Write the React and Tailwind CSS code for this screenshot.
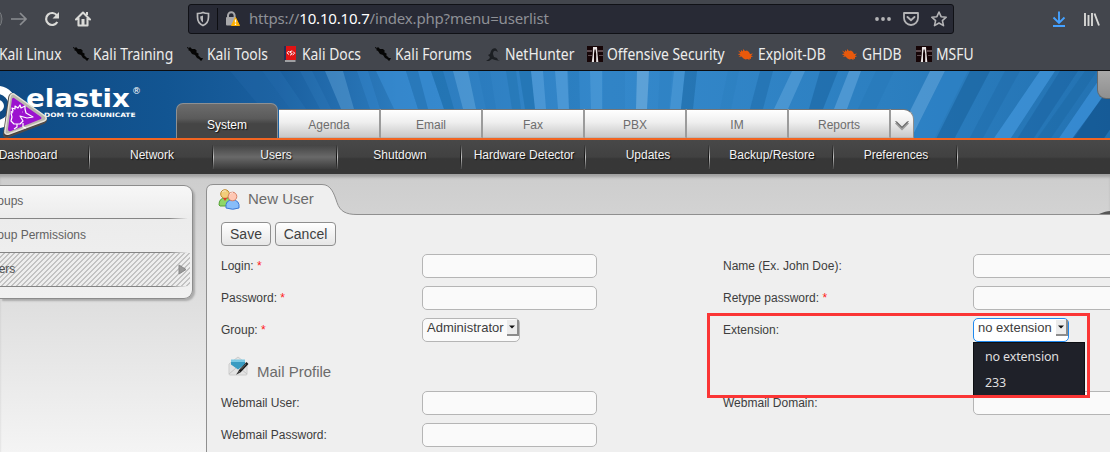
import React from "react";

const BOOKMARKS = [
  { label: "Kali Training", icon: "dragon", w: "w-[114px]" },
  { label: "Kali Tools", icon: "dragon", w: "w-[95px]" },
  { label: "Kali Docs", icon: "docs", w: "w-[93px]" },
  { label: "Kali Forums", icon: "dragon", w: "w-[110px]" },
  { label: "NetHunter", icon: "hunter", w: "w-[102px]" },
  { label: "Offensive Security", icon: "tower", w: "w-[151px]" },
  { label: "Exploit-DB", icon: "bug", w: "w-[104px]" },
  { label: "GHDB", icon: "bug", w: "w-[74px]" },
  { label: "MSFU", icon: "tower", w: "w-[80px]" },
];

function BookmarkIcon({ kind }) {
  return (
    <svg width="17" height="17" viewBox="0 0 17 17" className="shrink-0">
      {kind === "dragon" && (
        <path d="M0 1l2 1 1-1 2 2 3 0 2 2-1 1 3 2-1 1 2 2 1 1 2 0-1 2-1 1-2-2-2-1-2-3-3-1-2-3-2-1 1-1-2-1z" fill="#050505" />
      )}
      {kind === "docs" && (
        <g>
          <path d="M2 0h12v14H2z" fill="#e01414" />
          <path d="M2 0h2v14H2z" fill="#233056" />
          <path d="M3 15h10.500" stroke="#ddd" strokeWidth="1.200" />
          <path d="M6.800 5L5 6.800 7 8.500M11 5.500l1.700 1.700-2 1.800M10.200 4.800L7.500 6l2.800 1.700-2.300 1.600" stroke="#fff" strokeWidth="1" fill="none" />
        </g>
      )}
      {kind === "hunter" && (
        <path d="M1 15l3-2c2-2 0-3-1-4l2-1 1-3c1-3 5-4 6-1l1 2-2-1c-2-1-3 1-3 3l1 3 3 1 1 2 2 1-5-1-3-1-3 2z" fill="#1c1f23" />
      )}
      {kind === "tower" && (
        <g>
          <path d="M0 0h16v16H0z" fill="#160507" />
          <path d="M0 4h5v2H0zM11 4h5v2h-5zM1 9h4v1H1zM12 9h4v1h-4z" fill="#5d4a4e" />
          <path d="M6 1h4l.5 7 .8 8H9.200V8L8.600 3.500h-1L7 8v8H4.800l1-8z" fill="#e9e4e4" />
        </g>
      )}
      {kind === "bug" && (
        <path d="M0 4.500l3 1.500 0-2 2 1.500 0-2.500 2 2 2-.5 2 1.500 1 2 3-.5-2 2 2 1-2 .5 0 2-1.500-.5 0 1.500-2-1-2 .5-2-1-2-2-3 .5 2-1.500-3-1.500 3-.5z" fill="#e8590c" />
      )}
    </svg>
  );
}

function BrowserChrome() {
  return (
    <header className="h-[71px] shrink-0 border-b border-[#0c0d10] bg-[#43464d] font-['Noto_Sans',sans-serif]">
      <div className="flex h-[38px] items-center">
        <svg width="188" height="38" viewBox="0 0 188 38" fill="none" className="shrink-0">
          <circle cx="-10" cy="19" r="12" fill="#53565b" stroke="#777a7e" />
          <path d="M11 19h15M20 13l6 6-6 6" stroke="#8b8d91" strokeWidth="1.700" />
          <path d="M57 15.500A6 6 0 1 0 57.300 22" stroke="#dadad7" strokeWidth="2.200" />
          <path d="M59 12v6.500h-6.500z" fill="#dadad7" />
          <path d="M76 19.500l7-7 7 7M78.500 18v7.500h9V18" stroke="#dadad7" strokeWidth="2.100" strokeLinejoin="round" strokeLinecap="round" />
          <path d="M81.500 19h3v6h-3zM86 12h2v3h-2z" fill="#dadad7" />
        </svg>
        <div className="flex h-[30px] w-[766px] items-center rounded-[3px] border border-[#101116] bg-[#282a35]">
          <svg width="58" height="28" viewBox="0 0 58 28" fill="none" className="shrink-0">
            <path d="M14 7.500c-2 1-3.500 1-5.500 1v3.500c0 4 2 7 5.500 8.500 3.500-1.500 5.500-4.500 5.500-8.500V8.500c-2 0-3.500 0-5.500-1z" stroke="#b9b9bb" strokeWidth="1.700" />
            <path d="M14 10.500v7c-1.800-1-2.800-3-2.800-6z" fill="#b9b9bb" />
            <path d="M28.500 3v22" stroke="#0d0e12" />
            <path d="M39 13v-2.500a3.300 3.300 0 0 1 6.600 0V13" stroke="#a8a8aa" strokeWidth="2" />
            <rect x="37" y="12" width="9.500" height="8.500" rx="1" fill="#a8a8aa" />
            <path d="M46.500 12.500l4 8h-8z" fill="#ffb000" stroke="#ffb000" strokeLinejoin="round" />
            <path d="M46.500 14.500v3M46.500 18.500v1.500" stroke="#fff" strokeWidth="1.300" />
          </svg>
          <div className="mb-px ml-[2px] flex-1 text-[15px] tracking-[-0.180px] whitespace-nowrap text-[#8e9096]">
            https://<span className="text-white">10.10.10.7</span>/index.php?menu=userlist
          </div>
          <svg width="80" height="28" viewBox="0 0 80 28" fill="none" className="shrink-0">
            <g fill="#b4b4b6">
              <circle cx="4" cy="14" r="1.900" />
              <circle cx="10" cy="14" r="1.900" />
              <circle cx="16" cy="14" r="1.900" />
            </g>
            <path d="M31 8h14v5a7 7 0 0 1-14 0z" stroke="#b4b4b6" strokeWidth="1.800" strokeLinejoin="round" />
            <path d="M34.500 12l3.500 3.300 3.500-3.300" stroke="#b4b4b6" strokeWidth="1.900" strokeLinecap="round" />
            <path d="M66 7l2.100 4.700 5.100.5-3.800 3.400 1.100 5L66 18l-4.500 2.600 1.100-5-3.800-3.400 5.100-.5z" stroke="#b4b4b6" strokeWidth="1.600" strokeLinejoin="round" />
          </svg>
        </div>
        <svg width="156" height="38" viewBox="0 0 156 38" fill="none" className="shrink-0">
          <path d="M105 11.500V23M99.500 17.500l5.500 5.500 5.500-5.500M99 26h12" stroke="#45a1ff" strokeWidth="1.900" />
          <path d="M131 13v13M134.500 15v11M138 13v13M140.500 13.500l4.500 12" stroke="#d7d7d5" strokeWidth="1.900" />
        </svg>
      </div>
      <nav className="flex h-[33px] items-center text-[15.500px] whitespace-nowrap text-[#ededec]">
        <div className="flex w-[73px] shrink-0 justify-start">
          <span className="-ml-[1px] origin-left scale-x-[0.895]">Kali Linux</span>
        </div>
        {BOOKMARKS.map((b) => (
          <div key={b.label} className={`flex shrink-0 items-center gap-[3px] ${b.w}`}>
            <BookmarkIcon kind={b.icon} />
            <span className="origin-left scale-x-[0.895]">{b.label}</span>
          </div>
        ))}
      </nav>
    </header>
  );
}

// Each ray: left/right edge at the top, left/right edge 38px lower, fill, opacity.
const RAYS = [
  [230, 262, 262, 290, "#3a86c8", 0.12],
  [262, 280, 290, 306, "#3a86c8", 0.18],
  [300, 312, 320, 331, "#3a86c8", 0.2],
  [325, 343, 341, 354, "#6aa9dc", 0.4],
  [357, 368, 370, 380, "#3a8fd6", 0.3],
  [376, 406, 394, 418, "#3d93db", 0.5],
  [406, 418, 418, 428, "#1f70ae", 0.25],
  [418, 431, 428, 444, "#3d93db", 0.5],
  [431, 443, 444, 454, "#1a6ba8", 0.5],
  [453, 468, 463, 476, "#74b3e6", 0.4],
  [478, 490, 486, 496, "#1f70ae", 0.2],
  [506, 516, 512, 521, "#1f70ae", 0.45],
  [519, 531, 525, 535, "#1a6ba8", 0.5],
  [531, 543, 535, 546, "#6eb2e8", 0.4],
  [555, 568, 558, 569, "#6eb2e8", 0.4],
  [567, 579, 569, 580, "#1f70ae", 0.3],
  [590, 602, 591, 602, "#6eb2e8", 0.3],
  [603, 625, 603, 625, "#1f70ae", 0.15],
  [637, 649, 636, 647, "#9cc9ec", 0.4],
  [660, 672, 658, 669, "#1f70ae", 0.15],
  [674, 685, 670, 681, "#6eb2e8", 0.3],
  [685, 697, 681, 693, "#1a65a0", 0.5],
  [728, 739, 720, 731, "#1f70ae", 0.15],
  [760, 773, 750, 763, "#1a65a0", 0.4],
  [792, 805, 774, 788, "#7cb9ea", 0.35],
  [820, 838, 809, 823, "#155f9c", 0.5],
  [849, 861, 834, 847, "#7cb9ea", 0.4],
  [876, 894, 858, 876, "#1f70ae", 0.25],
  [930, 945, 911, 926, "#7cb9ea", 0.4],
  [945, 968, 926, 949, "#2f83c8", 0.6],
  [970, 990, 951, 970, "#135a94", 0.45],
  [1005, 1020, 985, 999, "#1a65a0", 0.3],
  [1040, 1055, 1014, 1030, "#4ba0e8", 0.55],
  [1060, 1078, 1036, 1053, "#135a94", 0.35],
  [1085, 1097, 1058, 1071, "#135a94", 0.25],
  [1105, 1120, 1079, 1094, "#3d93db", 0.7],
  [1122, 1150, 1094, 1124, "#0d4d85", 0.6],
];

function BannerRays() {
  return (
    <svg width="1110" height="67" viewBox="0 0 1110 67" className="absolute inset-0">
      <defs>
        <linearGradient id="sky" x1="0" x2="1" y1="0" y2="0">
          <stop offset="0" stopColor="#104a83" />
          <stop offset="0.15" stopColor="#125592" />
          <stop offset="0.25" stopColor="#1a5f9f" />
          <stop offset="0.36" stopColor="#2c7bbd" />
          <stop offset="0.55" stopColor="#3488cb" />
          <stop offset="0.8" stopColor="#2c7fc0" />
          <stop offset="1" stopColor="#2372b2" />
        </linearGradient>
      </defs>
      <rect width="1110" height="67" fill="url(#sky)" />
      {RAYS.map(([a, b, c, d, fill, opacity]) => {
        const k = 67 / 38;
        const l = a + (c - a) * k;
        const r = b + (d - b) * k;
        return <polygon key={a} points={`${a},0 ${b},0 ${r},67 ${l},67`} fill={fill} opacity={opacity} />;
      })}
    </svg>
  );
}

function Logo() {
  return (
    <div className="relative h-[69px] w-[176px] shrink-0 font-['DejaVu_Sans',sans-serif] font-bold text-white">
      <div className="absolute top-[16px] left-[26px] origin-left scale-x-[1.150] text-[24px] leading-[24px]">elastix</div>
      <div className="absolute top-[15px] left-[132px] text-[9px] leading-[11px] font-normal">®</div>
      <div className="absolute top-[40px] left-[44px] origin-left scale-x-[1.240] text-[6px] leading-[7px] whitespace-nowrap">DOM TO COMUNICATE</div>
      <svg width="60" height="69" viewBox="0 0 60 69" className="absolute top-0 left-0" fill="none">
        <ellipse cx="-2" cy="36" rx="15" ry="17" stroke="#fff" strokeWidth="8" />
        <circle cx="-2" cy="35" r="6" fill="#fff" />
        <path d="M13 23L45 46q3 4-1 6L8 66q-5 1-4-4L9 26q1-4 4-3z" fill="#403b3c" stroke="#504b49" strokeWidth="1.500" />
        <path d="M14 23L45 45q3 3-1 5L9 63q-5 1-4-3L10 26q1-4 4-3z" fill="#b9b5ad" stroke="#e8e4da" strokeWidth="1.500" />
        <path d="M14 27L41 46q1 1 0 2L11 60q-3 1-3-2L12 28q1-2 2-1z" fill="#9c12cf" />
        <path d="M13 42l-2-1 2-1-1-3 3 1 0-3 3 2 2-3 1 3 4-2 0 3 1 4 7 4-6 1-7-2 3 5-3 3-6 0-3-3 1-4-1-4M17 53l0 3-3 2M23 52l0 4 3 1M22 41h.5" stroke="#fff" strokeWidth="1.200" strokeLinejoin="round" />
      </svg>
    </div>
  );
}

const TABS = ["Agenda", "Email", "Fax", "PBX", "IM", "Reports"];

function Banner() {
  return (
    <div className="relative h-[69px] shrink-0 overflow-hidden border-b-2 border-[#f26522] bg-[#125592]">
      <BannerRays />
      <div className="relative flex h-[69px] items-end">
        <Logo />
        <div className="mr-px flex h-[37px] w-[102px] shrink-0 items-center justify-center rounded-t-[7px] border-x border-t border-[#8e9092] bg-linear-to-b from-[#6c6c6c] via-[#5b5b5b] via-40% to-[#454545] to-55% pt-[5px] text-white [text-shadow:1px_1px_1px_#111]">
          System
        </div>
        {TABS.map((t) => (
          <div
            key={t}
            className="flex h-[31px] w-[102px] shrink-0 items-center justify-center border-t border-r-2 border-b-[3px] border-t-[#737577] border-r-[#9b9b9b] border-b-[#b9b9b9] bg-linear-to-b from-white via-[#efefef] via-45% to-[#c9c9c9] pt-[3px] text-[#6d6d6d]"
          >
            {t}
          </div>
        ))}
        <div className="flex h-[31px] w-[23px] shrink-0 items-center justify-center rounded-tr-[10px] border-t border-r border-b-[3px] border-t-[#737577] border-r-[#8d8d8d] border-b-[#b9b9b9] bg-linear-to-b from-white via-[#efefef] via-45% to-[#c9c9c9]">
          <svg width="14" height="12" viewBox="0 0 14 12" className="mt-[4px] -ml-px" fill="none">
            <path d="M1 2.500l6 6 6-6" stroke="#9b9b9b" strokeWidth="3" />
            <path d="M.5 1L7 7.500 13.500 1" stroke="#555" strokeWidth="1" />
          </svg>
        </div>
        <div className="ml-auto h-[28px] w-[13px] self-start rounded-bl-[9px] border-b border-l border-[#65696c] bg-linear-to-b from-[#a9a9a9] to-[#8f8f8f]" />
      </div>
    </div>
  );
}

const MENU = ["Dashboard", "Network", "Users", "Shutdown", "Hardware Detector", "Updates", "Backup/Restore", "Preferences"];

function SubNav() {
  return (
    <nav className="flex h-[34px] shrink-0 items-center bg-linear-to-b from-[#484848] via-[#414141] via-50% to-[#373737] to-55% text-[#f3f3f3]">
      <div className="-ml-[34px] flex h-full">
        {MENU.map((m) => (
          <div key={m} className="flex h-full w-[124px] shrink-0 items-center pb-px">
            <div
              className={`flex h-[24px] flex-1 items-center justify-center pb-[4px] pl-[2px] whitespace-nowrap [text-shadow:1px_1px_1px_#111] ${
                m === "Users" ? "bg-linear-to-b from-[#444] via-[#696969] to-[#3b3b3b]" : ""
              }`}
            >
              {m}
            </div>
            <div className="h-[24px] w-px bg-linear-to-b from-[#3f3f3f] via-[#111] to-[#3f3f3f]" />
            <div className="h-[24px] w-px bg-linear-to-b from-[#454545] via-[#c4c4c4] to-[#454545]" />
          </div>
        ))}
      </div>
    </nav>
  );
}

function SideMenu() {
  return (
    <aside className="mt-[11px] h-[114px] w-[193px] shrink-0 rounded-r-[9px] border-y border-r border-[#8c8c8c] bg-linear-to-b from-[#f7f7f7] via-[#ececec] via-30% to-[#f1f1f1] text-[#626262] shadow-[2px_2px_2px_#aaa]">
      <div className="flex h-[32px] items-center">
        <span className="-ml-[16px] pb-[2px]">Groups</span>
      </div>
      <div className="h-px w-[188px] bg-linear-to-r from-[#858585] from-90% to-transparent" />
      <div className="flex h-[33px] items-center">
        <span className="-ml-[16px] whitespace-nowrap pb-[2px]">Group Permissions</span>
      </div>
      <div className="h-px w-[188px] bg-linear-to-r from-[#858585] from-90% to-transparent" />
      <div className="flex h-[33px] w-[190px] items-center justify-between bg-[repeating-linear-gradient(135deg,#eeeeee_0px,#eeeeee_2.600px,#c3c3c3_2.600px,#c3c3c3_3.540px)] pr-[3px] text-[#505050]">
        <span className="-ml-[16px] pb-[2px]">Users</span>
        <svg width="9" height="11" viewBox="0 0 9 11">
          <path d="M1 1v9l7-4.500z" fill="#999" stroke="#888" />
        </svg>
      </div>
      <div className="h-px w-[188px] bg-linear-to-r from-[#858585] from-90% to-transparent" />
    </aside>
  );
}

function PeopleIcon() {
  return (
    <svg width="22" height="21" viewBox="0 0 22 21" className="shrink-0">
      <path d="M1 16q0-7 6-7t6 4v4H2z" fill="#8fd768" stroke="#54a134" />
      <circle cx="7" cy="5" r="4.300" fill="#f2cd7a" stroke="#bf8b31" />
      <path d="M5 9l2 3 2-3" fill="#e23a2d" />
      <path d="M8 19q-1-8 6.500-8t6.500 8q-6 2.500-13 0z" fill="#88bdf9" stroke="#3b78d6" />
      <circle cx="14.500" cy="7.500" r="4.300" fill="#ffc7b3" stroke="#d78065" />
      <path d="M4 3q2-2 4-1M12 5q1-1.500 3-1.500" stroke="#fff" strokeOpacity=".6" fill="none" />
    </svg>
  );
}

function MailIcon() {
  return (
    <svg width="21" height="20" viewBox="0 0 21 20" className="shrink-0">
      <path d="M1 8l9-7 9 7v10q0 1-1 1H2q-1 0-1-1z" fill="#e3e3e3" stroke="#cdcdcd" />
      <path d="M3 3.500h14v4.500l-7 5-7-5z" fill="#7cc9e4" />
      <path d="M3 6h14v2.500l-7 5-7-5z" fill="#3a9cc2" />
      <path d="M1 18l7-6M19 18l-6-5" stroke="#c5c5c5" />
      <path d="M19.500 7l-8 8.500" stroke="#1b1b1b" strokeWidth="2.600" />
      <path d="M10.700 14.700l-2.700 4 4.500-2.200z" fill="#333" />
      <path d="M18 8l-5 5.500" stroke="#777" strokeWidth=".8" />
    </svg>
  );
}

function Label({ children, required }) {
  return (
    <div className="whitespace-nowrap text-[#3d3d3d]">
      {children}
      {required && <span className="text-[#ff1a1a]"> *</span>}
    </div>
  );
}

function Field({ className = "" }) {
  return <div className={`h-[24px] rounded-[5px] border border-[#b5b5b5] bg-[#fafafa] ${className}`} />;
}

function Select({ value, focused }) {
  return (
    <div
      className={`flex h-[24px] items-start justify-between rounded-[5px] border pl-[4px] text-[13px] text-[#3d3d3d] ${
        focused ? "w-[96px] border-[#2089ee] bg-white" : "w-[98px] border-[#b5b5b5] bg-[#fafafa]"
      }`}
    >
      <span className="leading-[18px] whitespace-nowrap">{value}</span>
      <span className="mt-px flex h-[16px] w-[12px] shrink-0 items-center justify-center border-r-2 border-b-2 border-[#8c8c8c] bg-[#ececec]">
        <svg width="6" height="4" viewBox="0 0 6 4">
          <path d="M0 .5h6L3 3.500z" fill="#111" />
        </svg>
      </span>
    </div>
  );
}

const ROW = "grid h-[32px] grid-cols-[201px_301px_250px_180px] items-center";

function MainPanel() {
  return (
    <main className="relative mt-[10px] ml-[13px] flex-1">
      <svg width="904" height="268" viewBox="0 0 904 268" fill="none" className="absolute inset-0">
        <path d="M.5 269V7q0-6.500 6.500-6.500H116c9 0 12 9 15 18s9 12 20 12H910V269z" fill="#efefef" stroke="#8f8f8f" />
        <path d="M893 30q7-3 11-3v3z" fill="#555" />
      </svg>
      <div className="relative pl-[15px]">
        <div className="flex h-[30px] items-center gap-[8px] text-[15px] text-[#6b6b6b]">
          <span className="-ml-[3px]"><PeopleIcon /></span>
          <span>New User</span>
        </div>
        <div className="mt-[8px] mb-[4px] flex gap-[4px] text-[14px] text-[#3f3f3f]">
          <div className="flex h-[24px] w-[50px] items-center justify-center rounded-[4px] border border-[#8f8f8f] bg-linear-to-b from-white to-[#e6e6e6]">Save</div>
          <div className="flex h-[24px] w-[61px] items-center justify-center rounded-[4px] border border-[#8f8f8f] bg-linear-to-b from-white to-[#e6e6e6]">Cancel</div>
        </div>
        <div className={ROW}>
          <Label required>Login:</Label>
          <Field className="w-[175px]" />
          <Label>Name (Ex. John Doe):</Label>
          <Field />
        </div>
        <div className={ROW}>
          <Label required>Password:</Label>
          <Field className="w-[175px]" />
          <Label required>Retype password:</Label>
          <Field />
        </div>
        <div className={ROW}>
          <Label required>Group:</Label>
          <Select value="Administrator" />
          <Label>Extension:</Label>
          <div className="relative">
            <Select value="no extension" focused />
            <div className="absolute top-[24px] left-0 z-10 h-[54px] w-[112px] border border-[#0d0e12] bg-[#1f2129] pt-px pl-[11px] font-['Noto_Sans',sans-serif] text-[12.500px] tracking-[-0.150px] text-[#dfdfdf]">
              <div className="flex h-[26px] items-center">no extension</div>
              <div className="flex h-[26px] items-center">233</div>
            </div>
          </div>
        </div>
        <div className="flex h-[41px] items-center gap-[8px] pl-[7px] text-[15px] text-[#6b6b6b]">
          <span className="-mt-px"><MailIcon /></span>
          <span className="pt-[12px]">Mail Profile</span>
        </div>
        <div className={ROW}>
          <Label>Webmail User:</Label>
          <Field className="w-[175px]" />
          <Label>Webmail Domain:</Label>
          <Field />
        </div>
        <div className={ROW}>
          <Label>Webmail Password:</Label>
          <Field className="w-[175px]" />
        </div>
      </div>
      <div className="absolute top-[129px] left-[501px] z-20 h-[85px] w-[383px] border-3 border-[#fb3535]" />
    </main>
  );
}

export default function App() {
  return (
    <div className="flex h-[452px] w-[1110px] flex-col overflow-hidden bg-[#d4d4d4] font-['Liberation_Sans',sans-serif] text-[12px]">
      <BrowserChrome />
      <Banner />
      <SubNav />
      <div className="flex min-h-0 flex-1 bg-linear-to-b from-[#cdcdcd] to-[#f4f4f4] shadow-[inset_0_4px_3px_-1px_#a0a0a0]">
        <SideMenu />
        <MainPanel />
      </div>
    </div>
  );
}
